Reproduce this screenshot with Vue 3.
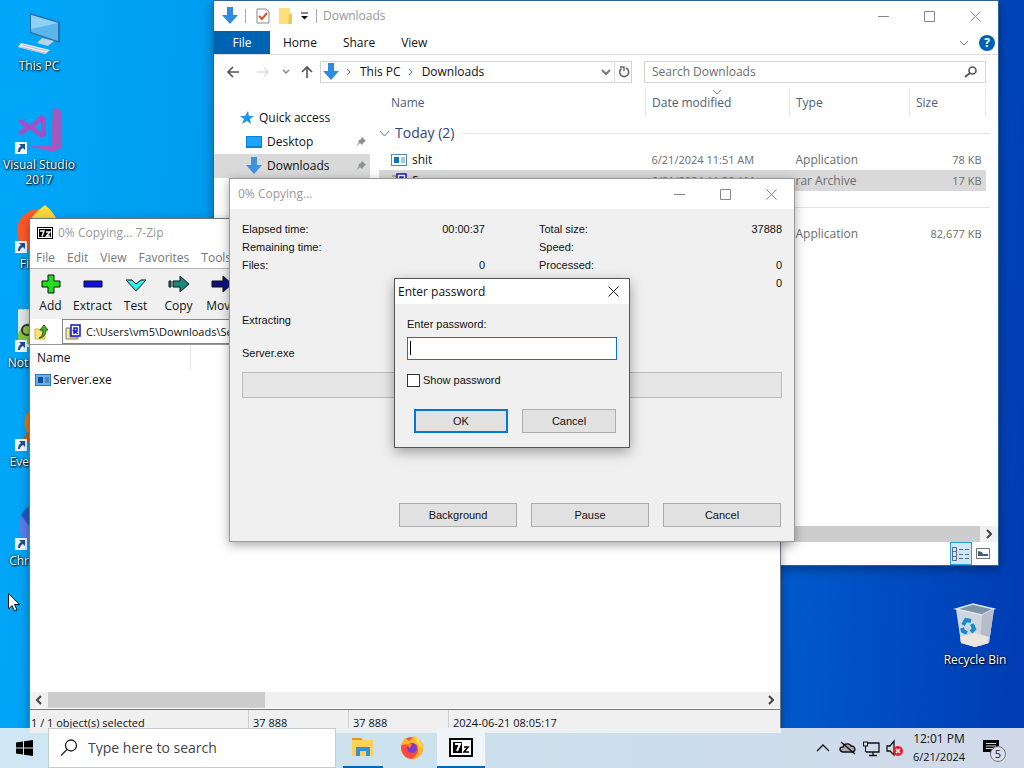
<template>
  <div class="desktop">
    <!-- Desktop icons -->
    <div class="shortcuts">
      <div v-for="item in shortcuts" :key="item.name" class="shortcut">
        <svg class="shortcut-icon" width="48" height="48" viewBox="0 0 48 48">
          <g v-if="item.icon === 'pc'">
            <path d="M15 6 L45 15 V36 L15 26 Z" fill="#2b6f9f" />
            <path d="M16 8 L43 16 V34 L16 25 Z" fill="#5cb6ec" />
            <path d="M16 8 L43 16 L16 22 Z" fill="#8fd0f5" />
            <path d="M27 31 L39 34 L33 39 L22 36 Z" fill="#b9d3e2" />
            <path d="M6 36 L35 43 L30 47 L3 40 Z" fill="#f1eef0" />
            <path d="M7 38 L32 44 M6 40 L30 46" stroke="#b9bcc4" stroke-width="1" />
          </g>
          <g v-else-if="item.icon === 'vs'">
            <path d="M38 1 L47 5 V42 L38 46 L14 40 L36 40 Z" fill="#a05ac0" />
            <path
              d="M3 15 L7 13 L15 19 L26 9 L31 11 V30 L26 32 L15 23 L7 29 L3 27 L9 21 Z M26 16 L20 21 L26 26 Z"
              fill="#a54fc6"
              fill-rule="evenodd"
            />
          </g>
          <g v-else-if="item.icon === 'firefox'">
            <circle cx="24" cy="26" r="22" fill="#ff5a28" />
            <path d="M17 12 C21 7 26 3 30 0 C35 4 42 11 44 22 L24 24 Z" fill="#ffd83a" />
            <circle cx="24" cy="27" r="10" fill="#7a3bd6" />
          </g>
          <g v-else-if="item.icon === 'notepad'">
            <rect x="3" y="5" width="38" height="38" fill="#dfe9e8" />
            <path d="M3 4 H42" stroke="#4d8fbc" stroke-width="3" stroke-dasharray="2 2" />
            <path d="M3 30 C8 18 20 14 30 20 L28 40 H3 Z" fill="#8cc63f" />
            <circle cx="12" cy="26" r="5" fill="none" stroke="#334" stroke-width="2" />
          </g>
          <g v-else-if="item.icon === 'everything'">
            <circle cx="28" cy="20" r="15" fill="none" stroke="#e07a18" stroke-width="7" />
            <path d="M16 31 L5 44" stroke="#c56410" stroke-width="7" />
          </g>
          <g v-else>
            <circle cx="26" cy="24" r="22" fill="#5b7fe8" />
            <path d="M6 13 A22 22 0 0 1 46 15 H26 L17 28 Z" fill="#1f5cc4" />
            <circle cx="26" cy="24" r="9" fill="#fff" />
          </g>
          <g v-if="item.link">
            <rect x="0" y="36" width="12" height="12" fill="#f4f7fb" />
            <path d="M4 38 H10 V44 L8 42 C6 43 5 44 5 46 H3 C3 43 4 41 6 40 Z" fill="#1d4f96" />
          </g>
        </svg>
        <span class="shortcut-label">{{ item.name }}</span>
      </div>
    </div>

    <div class="shortcut recycle">
      <svg class="shortcut-icon" width="48" height="48" viewBox="0 0 48 48">
        <path d="M5 8 L22 3 L43 8 L38 42 L24 46 L10 42 Z" fill="#cfd6de" />
        <path d="M5 8 L22 3 L43 8 L31 14 Z" fill="#7f93a8" stroke="#dfe5ea" stroke-width="1.500" />
        <path d="M31 14 L43 8 L38 42 L29 45 Z" fill="#b7bdc8" />
        <path d="M9 36 L24 32 L38 36 L37 42 L24 46 L10 42 Z" fill="#ebe5df" />
        <g fill="none" stroke="#1789cf" stroke-width="4">
          <path d="M12 24 L15 19 L20 20" />
          <path d="M21 23 L23 28 L20 31" />
          <path d="M16 32 L12 30 L11 27" />
        </g>
      </svg>
      <span class="shortcut-label">Recycle Bin</span>
    </div>

    <!-- File Explorer -->
    <section class="window explorer">
      <header class="titlebar">
        <svg width="16" height="18" viewBox="0 0 16 18"><path :d="arrowDown" fill="#2f8ae0" /></svg>
        <i class="divider"></i>
        <svg class="gap-left" width="14" height="16" viewBox="0 0 14 16">
          <path d="M1 1 H10 L13 4 V15 H1 Z" fill="#fff" stroke="#888" />
          <path d="M3 8 L6 11 L11 5" fill="none" stroke="#d2552e" stroke-width="2" />
        </svg>
        <svg class="gap-left" width="14" height="16" viewBox="0 0 14 16">
          <path d="M1 0 H12 V5 H14 V16 H1 Z" fill="#ffdf7c" />
          <path d="M11 6 H14 V16 H10 Z" fill="#f2c94f" />
        </svg>
        <svg class="gap-left" width="9" height="8" viewBox="0 0 9 8">
          <path d="M1 1 H8" stroke="#111" />
          <path d="M1 4 H8 L4.500 7.500 Z" fill="#111" />
        </svg>
        <i class="divider"></i>
        <span class="title">Downloads</span>
        <WindowButtons />
      </header>

      <nav class="ribbon">
        <button class="tab file">File</button>
        <button class="tab">Home</button>
        <button class="tab">Share</button>
        <button class="tab">View</button>
        <span class="ribbon-end">
          <svg width="8" height="6" viewBox="0 0 8 6"><path d="M0 1 L4 5 L8 1" fill="none" stroke="#777" /></svg>
          <button class="help">?</button>
        </span>
      </nav>

      <div class="address-row">
        <svg class="nav-arrows" width="88" height="16" viewBox="0 0 88 16" fill="none">
          <path d="M12 8 H1 M6 3 L1 8 L6 13" stroke="#555" stroke-width="1.600" />
          <path d="M30 8 H41 M37 4 L41 8 L37 12" stroke="#ddd" stroke-width="1.400" />
          <path d="M56 6 L59 9 L62 6" stroke="#888" stroke-width="1.500" />
          <path d="M80 14 V3 M75 8 L80 3 L85 8" stroke="#555" stroke-width="1.600" />
        </svg>
        <div class="address">
          <svg width="16" height="18" viewBox="0 0 16 18"><path :d="arrowDown" fill="#2f8ae0" /></svg>
          <svg class="crumb-sep" width="5" height="8" viewBox="0 0 5 8"><path d="M1 1 L4 4 L1 7" /></svg>
          <span>This PC</span>
          <svg class="crumb-sep" width="5" height="8" viewBox="0 0 5 8"><path d="M1 1 L4 4 L1 7" /></svg>
          <span>Downloads</span>
          <span class="address-tools">
            <svg width="10" height="8" viewBox="0 0 10 8">
              <path d="M1 2 L5 6 L9 2" fill="none" stroke="#777" stroke-width="2" />
            </svg>
            <i class="tool-line"></i>
            <svg width="12" height="12" viewBox="0 0 12 12">
              <path d="M8 2 A4.500 4.500 0 1 1 3.500 2.500" fill="none" stroke="#666" stroke-width="1.600" />
              <path d="M2 1 H6 V5" fill="none" stroke="#666" stroke-width="1.400" />
            </svg>
          </span>
        </div>
        <label class="search">
          <input type="text" placeholder="Search Downloads" aria-label="Search Downloads" />
          <svg width="14" height="12" viewBox="0 0 14 12" fill="none" stroke="#555">
            <circle cx="8.500" cy="4.500" r="3.500" stroke-width="1.600" />
            <path d="M6 7 L1 11" stroke-width="2" />
          </svg>
        </label>
      </div>

      <div class="explorer-body">
        <aside class="sidebar">
          <a class="side-item top" href="#">
            <svg width="14" height="14" viewBox="0 0 14 14">
              <path d="M8 0 L9 5 L14 5 L10 8 L11 13 L7 10 L2 13 L4 8 L0 5 L5 5 Z" fill="#2196e8" />
            </svg>
            Quick access
          </a>
          <a v-for="place in places" :key="place" class="side-item" :class="{ selected: place === 'Downloads' }" href="#">
            <svg v-if="place === 'Desktop'" width="16" height="16" viewBox="0 0 16 16">
              <rect y="2" width="16" height="12" fill="#0a7fd6" />
              <rect x="1" y="3" width="14" height="9" fill="#1ba5ff" />
            </svg>
            <svg v-else width="16" height="18" viewBox="0 0 16 18"><path :d="arrowDown" fill="#3f93de" /></svg>
            {{ place }}
            <svg class="pin" width="10" height="10" viewBox="0 0 10 10">
              <path d="M6 0 L10 4 L8 5 L6 8 L4 6 L0 10 L3 5 L2 4 L5 2 Z" fill="#8a8f94" />
            </svg>
          </a>
        </aside>

        <main class="files">
          <table>
            <colgroup>
              <col />
              <col class="col-date" />
              <col class="col-type" />
              <col class="col-size" />
            </colgroup>
            <thead>
              <tr>
                <th class="name">Name</th>
                <th>
                  Date modified
                  <svg class="sort" width="8" height="5" viewBox="0 0 8 5"><path d="M0 0 L4 4 L8 0" fill="none" stroke="#888" /></svg>
                </th>
                <th>Type</th>
                <th>Size</th>
              </tr>
            </thead>
            <tbody v-for="group in groups" :key="group.label">
              <tr class="group">
                <td colspan="4">
                  <div class="group-line">
                    <svg width="11" height="7" viewBox="0 0 11 7"><path d="M1 1 L5.500 6 L10 1" fill="none" stroke="#777" /></svg>
                    {{ group.label }}
                  </div>
                </td>
              </tr>
              <tr v-for="file in group.files" :key="file.name" :class="{ picked: file.picked }">
                <td class="file-name">
                  <div class="file-cell">
                    <svg v-if="file.picked" width="16" height="16" viewBox="0 0 16 16">
                      <path d="M1 3 H5 V15 H14" fill="#ffe98a" stroke="#777" />
                      <rect x="6" y="1" width="9" height="11" fill="#fff" stroke="#1515c5" stroke-width="1.500" />
                      <path d="M9 10 V4 H12 V7 H9 L13 10" fill="none" stroke="#1515c5" stroke-width="1.500" />
                    </svg>
                    <svg v-else width="16" height="12" viewBox="0 0 16 12">
                      <rect x="0.500" y="0.500" width="15" height="11" fill="#f4fbff" stroke="#5a8aa8" />
                      <rect x="3" y="3" width="5" height="6" fill="#1671b8" />
                      <path d="M10 4 H14 M10 6 H14 M10 8 H14" stroke="#4b9bc8" />
                    </svg>
                    {{ file.name }}
                  </div>
                </td>
                <td class="digits">{{ file.date }}</td>
                <td>{{ file.type }}</td>
                <td class="digits num">{{ file.size }}</td>
              </tr>
            </tbody>
          </table>
          <div class="scrollbar">
            <i class="thumb wide"></i>
            <svg class="scroll-arrow" width="6" height="10" viewBox="0 0 6 10"><path d="M1 1 L5 5 L1 9" /></svg>
          </div>
        </main>
      </div>
      <footer class="explorer-status">
        <button class="view active" aria-label="Details">
          <svg width="18" height="14" viewBox="0 0 18 14" fill="none" stroke="#668">
            <path d="M0.500 0.500 H4.500 V13.500 H0.500 Z M0 4.500 H5 M0 9.500 H5 M7 2.500 H11 M13 2.500 H17 M7 7.500 H11 M13 7.500 H17 M7 11.500 H11 M13 11.500 H17" />
          </svg>
        </button>
        <button class="view" aria-label="Large icons">
          <svg width="14" height="11" viewBox="0 0 14 11">
            <rect x="0.500" y="0.500" width="13" height="10" fill="#fff" stroke="#777" />
            <path d="M2 3 L6 4 L7 6 H12 V8 H2 Z" fill="#3d5f7c" />
          </svg>
        </button>
      </footer>
    </section>

    <!-- 7-Zip file manager -->
    <section class="window sevenzip">
      <header class="titlebar">
        <svg width="16" height="12" viewBox="0 0 16 12">
          <rect width="16" height="12" fill="#000" />
          <rect x="1.500" y="1.500" width="13" height="9" fill="none" stroke="#fff" />
          <path d="M3 4 H7 L5 9.500 M9 5 H13 L9.500 9 H13" fill="none" stroke="#fff" stroke-width="1.400" />
        </svg>
        <span class="title">0% Copying... 7-Zip</span>
      </header>
      <nav class="menu">
        <button v-for="m in menu" :key="m">{{ m }}</button>
      </nav>
      <div class="toolbar">
        <button v-for="tool in tools" :key="tool.name">
          <svg width="22" height="20" viewBox="0 0 22 20">
            <path :d="tool.path" :fill="tool.color" stroke="#111" />
          </svg>
          {{ tool.name }}
        </button>
      </div>
      <div class="path-row">
        <button class="up" aria-label="Up one level">
          <svg width="16" height="16" viewBox="0 0 16 16">
            <path d="M1 5 H5 L6 7 H11 V15 H1 Z" fill="#ffe26a" stroke="#c9b34a" />
            <path d="M5 14 C8 13 9 10 9 6 H6 L10 1 L14 6 H12 C12 11 9 14 5 14 Z" fill="#4fae2a" stroke="#245d17" />
          </svg>
        </button>
        <div class="path">
          <svg width="16" height="16" viewBox="0 0 16 16">
            <path d="M1 4 H5 V13 H13 V15 H1 Z" fill="#ffe98a" stroke="#777" />
            <rect x="6" y="1" width="9" height="11" fill="#fff" stroke="#1515c5" stroke-width="1.500" />
            <path d="M9 10 V4 H12 V7 H9 L13 10" fill="none" stroke="#1515c5" stroke-width="1.500" />
          </svg>
          C:\Users\vm5\Downloads\Server.rar\
        </div>
      </div>
      <div class="archive">
        <div class="archive-head"><span>Name</span></div>
        <div class="archive-row">
          <svg width="16" height="12" viewBox="0 0 16 12">
            <rect x="0.500" y="0.500" width="15" height="11" fill="#6fb2ea" stroke="#2d72b0" />
            <rect x="3" y="3" width="5" height="6" fill="#0d4f9c" />
            <path d="M10 4 H14 M10 6 H14 M10 8 H14" stroke="#1b5fa5" />
          </svg>
          Server.exe
        </div>
      </div>
      <div class="scrollbar">
        <svg class="scroll-arrow" width="6" height="10" viewBox="0 0 6 10"><path d="M5 1 L1 5 L5 9" /></svg>
        <i class="thumb short"></i>
        <svg class="scroll-arrow end" width="6" height="10" viewBox="0 0 6 10"><path d="M1 1 L5 5 L1 9" /></svg>
      </div>
      <footer class="zip-status">
        <span class="wide">1 / 1 object(s) selected</span>
        <span>37 888</span>
        <span>37 888</span>
        <span>2024-06-21 08:05:17</span>
      </footer>
    </section>

    <!-- Copy progress -->
    <section class="window progress-window">
      <header class="titlebar">
        <span class="title">0% Copying...</span>
        <WindowButtons />
      </header>
      <div class="progress-body">
        <div class="stats">
          <dl v-for="(col, i) in stats" :key="i">
            <div v-for="row in col" :key="row[0]"><dt>{{ row[0] }}</dt><dd>{{ row[1] }}</dd></div>
          </dl>
        </div>
        <p>Extracting</p>
        <p class="current">Server.exe</p>
        <div class="bar" role="progressbar" aria-valuenow="0"></div>
        <div class="actions">
          <button class="btn">Background</button>
          <button class="btn">Pause</button>
          <button class="btn">Cancel</button>
        </div>
      </div>
    </section>

    <!-- Password prompt -->
    <form class="window password" @submit.prevent>
      <header class="titlebar">
        <span class="title">Enter password</span>
        <button class="close" type="button" aria-label="Close">
          <svg width="11" height="11" viewBox="0 0 11 11"><path d="M0.500 0.500 L10.500 10.500 M10.500 0.500 L0.500 10.500" stroke="#222" /></svg>
        </button>
      </header>
      <div class="password-body">
        <label for="pw">Enter password:</label>
        <div class="field"><input id="pw" v-model="password" :type="showPassword ? 'text' : 'password'" /></div>
        <label class="check"><input v-model="showPassword" type="checkbox" />Show password</label>
        <div class="actions">
          <button class="btn default" type="submit">OK</button>
          <button class="btn" type="button">Cancel</button>
        </div>
      </div>
    </form>

    <!-- Taskbar -->
    <footer class="taskbar">
      <button class="start" aria-label="Start">
        <svg width="17" height="16" viewBox="0 0 17 16">
          <path d="M0 2.500 L7 1.500 V7.500 H0 Z M8 1.300 L17 0 V7.500 H8 Z M0 8.500 H7 V14.500 L0 13.500 Z M8 8.500 H17 V16 L8 14.700 Z" fill="#000" />
        </svg>
      </button>
      <label class="task-search">
        <svg width="18" height="18" viewBox="0 0 18 18" fill="none" stroke="#222">
          <circle cx="11" cy="6.500" r="5.500" stroke-width="1.300" />
          <path d="M7 10.500 L1 16.500" stroke-width="1.300" />
        </svg>
        <input type="text" placeholder="Type here to search" aria-label="Type here to search" />
      </label>
      <div class="tasks">
        <button class="task open" aria-label="File Explorer">
          <svg width="22" height="20" viewBox="0 0 22 20">
            <path d="M0 1 H9 L11 3 H21 V19 H0 Z" fill="#ffd257" />
            <path d="M0 1 H9 L11 3 H0 Z" fill="#d99b16" />
            <path d="M4 19 V10 H18 V19 H14 V14 H8 V19 Z" fill="#3a8fd0" />
          </svg>
        </button>
        <button class="task" aria-label="Firefox">
          <svg width="24" height="24" viewBox="0 0 24 24">
            <circle cx="12" cy="13" r="11" fill="#ff4a3d" />
            <path d="M1 10 L5 3 L9 6 L14 1 C20 4 24 9 23 15 C21 21 17 24 12 24 C18 20 20 14 16 9 L8 9 Z" fill="#ffb52b" />
            <path d="M14 1 C20 4 23 9 22 14 L17 8 Z" fill="#ffdf3f" />
            <circle cx="12" cy="13" r="5" fill="#7d3bd2" />
            <path d="M5 9 L12 9 L10 13 Z" fill="#ff7a2a" />
          </svg>
        </button>
        <button class="task open active" aria-label="7-Zip">
          <svg width="24" height="19" viewBox="0 0 24 19">
            <rect x="1" y="1" width="22" height="17" fill="#fff" stroke="#000" stroke-width="2" />
            <rect x="4" y="4" width="9" height="11" fill="#000" />
            <path d="M6 6 H11 L8 13" fill="none" stroke="#fff" stroke-width="2" />
            <path d="M15 9 H19 L15 14 H20" fill="none" stroke="#000" stroke-width="1.600" />
          </svg>
        </button>
      </div>
      <div class="tray">
        <svg width="88" height="20" viewBox="0 0 88 20" fill="none" stroke="#111">
          <path d="M2 13 L8 7 L14 13" stroke-width="1.400" />
          <path d="M28 14 C24 13 24 9 28 9 C29 5 35 5 36 8 C41 8 41 14 37 14 Z" fill="#aaa" stroke-width="1.400" />
          <path d="M26 4 L40 16" stroke-width="1.500" />
          <path d="M53 5 H64 V14 H51 M58 14 V17 M54 17.500 H62" stroke-width="1.300" />
          <rect x="48.500" y="4" width="4" height="4" />
          <path d="M50.500 8 V14" />
          <path d="M72 8 H75 L79 3 V17 L75 13 H72 Z" stroke-width="1.300" />
          <circle cx="83" cy="13" r="5" fill="#e0202c" stroke="none" />
          <path d="M81 11 L85 15 M85 11 L81 15" stroke="#fff" stroke-width="1.500" />
        </svg>
        <div class="clock"><span>12:01 PM</span><span class="digits">6/21/2024</span></div>
        <button class="notify" aria-label="Notifications">
          <svg width="16" height="16" viewBox="0 0 16 16">
            <path d="M0 0 H16 V12 H10 L7 16 V12 H0 Z" fill="#000" />
            <path d="M3 3.500 H13 M3 6 H13 M3 8.500 H10" stroke="#cdd" />
          </svg>
          <span class="badge">5</span>
        </button>
      </div>
    </footer>

    <svg class="cursor" width="12" height="19" viewBox="0 0 12 19">
      <path d="M0.500 0.500 V16 L4 12.500 L6.500 18 L9 17 L6.500 11.500 H11.500 Z" fill="#fff" stroke="#111" />
    </svg>
  </div>
</template>

<script setup>
import { h, ref } from 'vue'

const password = ref('')
const showPassword = ref(false)

const arrowDown = 'M5 0 H11 V8 H16 L8 17 L0 8 H5 Z'

// minimize / maximize / close
const controls = [
  ['Minimize', 'M0 5.5 H11'],
  ['Maximize', 'M0.5 0.5 H10.5 V10.5 H0.5 Z'],
  ['Close', 'M0.5 0.5 L10.5 10.5 M10.5 0.5 L0.5 10.5']
]
const WindowButtons = () =>
  h('span', { class: 'window-buttons' }, controls.map(([label, d]) =>
    h('button', { 'aria-label': label }, [
      h('svg', { width: 11, height: 11, viewBox: '0 0 11 11' }, [h('path', { d, fill: 'none', stroke: '#888' })])
    ])
  ))

const shortcuts = [
  { name: 'This PC', icon: 'pc' },
  { name: 'Visual Studio 2017', icon: 'vs', link: true },
  { name: 'Firefox', icon: 'firefox', link: true },
  { name: 'Notepad++', icon: 'notepad', link: true },
  { name: 'Everything', icon: 'everything', link: true },
  { name: 'Chromium', icon: 'chromium', link: true }
]

const places = ['Desktop', 'Downloads']

const groups = [
  {
    label: 'Today (2)',
    files: [
      { name: 'shit', date: '6/21/2024 11:51 AM', type: 'Application', size: '78 KB' },
      { name: 'Server', date: '6/21/2024 11:30 AM', type: 'rar Archive', size: '17 KB', picked: true }
    ]
  },
  {
    label: 'Earlier this year (1)',
    files: [{ name: '', date: '', type: 'Application', size: '82,677 KB' }]
  }
]

const menu = ['File', 'Edit', 'View', 'Favorites', 'Tools']

const tools = [
  { name: 'Add', color: '#1fe01f', path: 'M8 1 H14 V7 H20 V13 H14 V19 H8 V13 H2 V7 H8 Z' },
  { name: 'Extract', color: '#1010e8', path: 'M2 7 H20 V13 H2 Z' },
  { name: 'Test', color: '#30f0f0', path: 'M1 6 H7 L11 10 L16 6 H21 L11 17 Z' },
  { name: 'Copy', color: '#1b8a7c', path: 'M1 7 H3 V13 H1 Z M5 7 H12 V2 L21 10 L12 18 V13 H5 Z' },
  { name: 'Move', color: '#101080', path: 'M1 7 H12 V2 L21 10 L12 18 V13 H1 Z' }
]

const stats = [
  [['Elapsed time:', '00:00:37'], ['Remaining time:', ''], ['Files:', '0']],
  [['Total size:', '37888'], ['Speed:', ''], ['Processed:', '0'], ['Packed size:', '0']]
]
</script>

<style>
body {
  margin: 0;
}

.window-buttons {
  display: flex;
  margin-left: auto;
}

.window-buttons button {
  width: 46px;
  height: 28px;
  padding: 0;
  border: 0;
  background: none;
}

.window-buttons svg {
  display: block;
  margin: 0 auto;
}
</style>

<style scoped>
.desktop {
  position: relative;
  height: 100vh;
  overflow: hidden;
  font-family: "Open Sans", "Noto Sans", sans-serif;
  font-size: 12px;
  line-height: 16px;
  color: #111;
  background: linear-gradient(94deg, #00a8fa 0%, #009cf0 20%, #0058cb 78%, #003bb2 100%);
}

.desktop * {
  box-sizing: border-box;
}

button,
input {
  font: inherit;
  color: inherit;
}

button {
  padding: 0;
  border: 0;
  background: none;
}

svg {
  flex: none;
}

p,
dl,
dd {
  margin: 0;
}

.digits {
  font-size: 11px;
}

/* Desktop */
.shortcuts {
  width: 78px;
}

.shortcut {
  display: flex;
  flex-direction: column;
  align-items: center;
  width: 78px;
  height: 99px;
  padding-top: 7px;
}

.shortcut-icon {
  height: 48px;
}

.shortcut-label {
  margin-top: 3px;
  line-height: 15px;
  text-align: center;
  color: #fff;
  text-shadow: 1px 1px 2px #000, 0 0 2px #000;
}

.recycle {
  position: absolute;
  top: 594px;
  right: 10px;
}

.cursor {
  position: absolute;
  left: 8px;
  top: 593px;
}

/* Windows */
.window {
  position: absolute;
  display: flex;
  flex-direction: column;
  background: #fff;
  border: 1px solid #6d7680;
  box-shadow: 0 3px 10px rgba(0, 0, 0, 0.35);
}

.titlebar {
  display: flex;
  align-items: center;
  height: 30px;
}

.title {
  color: #999;
}

.explorer {
  left: 213px;
  top: 0;
  width: 786px;
  height: 566px;
  border-color: #2e6396;
}

.explorer .titlebar {
  padding-left: 8px;
}

.divider {
  width: 1px;
  height: 14px;
  margin: 0 2px 0 7px;
  background: #aaa;
}

.gap-left {
  margin-left: 8px;
}

.explorer .title {
  margin-left: 4px;
}

.ribbon {
  display: flex;
  height: 24px;
  border-bottom: 1px solid #dcdcdc;
}

.tab {
  padding: 0 13px;
}

.tab.file {
  width: 56px;
  color: #fff;
  background: #0063b1;
}

.ribbon-end {
  display: flex;
  align-items: center;
  gap: 11px;
  margin-left: auto;
  padding-right: 3px;
}

.help {
  width: 16px;
  height: 16px;
  border-radius: 50%;
  font-weight: 700;
  color: #fff;
  background: #0063b1;
}

.address-row {
  display: flex;
  align-items: center;
  height: 34px;
  padding-right: 12px;
}

.nav-arrows {
  margin: 0 5px 0 13px;
}

.address,
.search {
  display: flex;
  align-items: center;
  height: 22px;
  border: 1px solid #d4d4d4;
}

.address {
  flex: 1;
  padding-left: 2px;
}

.crumb-sep {
  margin: 0 9px 0 7px;
  fill: none;
  stroke: #666;
}

.address-tools {
  display: flex;
  align-items: center;
  gap: 3px;
  margin-left: auto;
  padding-right: 1px;
}

.tool-line {
  width: 1px;
  height: 20px;
  background: #ddd;
}

.search {
  width: 342px;
  margin-left: 12px;
  padding: 0 7px;
}

.search input {
  flex: 1;
  min-width: 0;
  padding: 0;
  border: 0;
  outline: 0;
}

.search input::placeholder {
  color: #6d6d6d;
}

.explorer-body {
  display: flex;
  flex: 1;
  min-height: 0;
}

.sidebar {
  width: 156px;
  padding-top: 17px;
}

.side-item {
  display: flex;
  align-items: center;
  gap: 5px;
  height: 24px;
  padding: 0 4px 0 32px;
  color: #111;
  text-decoration: none;
}

.side-item.top {
  padding-left: 26px;
}

.side-item.selected {
  background: #d9d9d9;
}

.pin {
  margin-left: auto;
}

.files {
  display: flex;
  flex: 1;
  flex-direction: column;
  padding-left: 9px;
}

table {
  width: calc(100% - 12px);
  border-collapse: collapse;
  table-layout: fixed;
  color: #6d6d6d;
}

.col-date {
  width: 144px;
}

.col-type {
  width: 120px;
}

.col-size {
  width: 76px;
}

th {
  position: relative;
  height: 28px;
  padding: 0 6px;
  font-weight: 400;
  text-align: left;
  color: #4c607a;
  border-right: 1px solid #e8e8e8;
}

th.name {
  padding-left: 12px;
}

.sort {
  position: absolute;
  left: 67px;
  top: 1px;
}

td {
  height: 21px;
  padding: 0 4px 0 6px;
  white-space: nowrap;
}

td.num {
  text-align: right;
}

.group td {
  height: 32px;
  padding: 0;
}

.group-line {
  display: flex;
  align-items: center;
  gap: 5px;
  margin-right: -4px;
  font-size: 14px;
  color: #33437b;
}

.group-line::after {
  content: "";
  flex: 1;
  height: 1px;
  margin-left: 4px;
  background: #e3e3e3;
}

td.file-name {
  padding-left: 12px;
  color: #111;
}

.file-cell {
  display: flex;
  align-items: center;
  gap: 5px;
}

.picked {
  background: #d9d9d9;
}

.scrollbar {
  display: flex;
  align-items: center;
  height: 16px;
  margin-top: auto;
  background: #f0f0f0;
}

.scroll-arrow {
  margin: 0 6px;
  fill: none;
  stroke: #444;
  stroke-width: 2;
}

.scroll-arrow.end {
  margin-left: auto;
}

.thumb {
  height: 16px;
  background: #cdcdcd;
}

.thumb.wide {
  flex: 1;
}

.thumb.short {
  width: 217px;
}

.explorer-status {
  display: flex;
  justify-content: flex-end;
  height: 23px;
  padding-right: 4px;
}

.view {
  display: flex;
  align-items: center;
  justify-content: center;
  width: 22px;
}

.view.active {
  border: 1px solid #26a0da;
  background: #cce8f5;
}

/* 7-Zip */
.sevenzip {
  left: 29px;
  top: 218px;
  width: 752px;
  height: 515px;
}

.sevenzip .titlebar {
  flex: none;
  height: 28px;
  padding-left: 7px;
}

.sevenzip .title {
  margin-left: 5px;
}

.menu {
  display: flex;
  gap: 12px;
  height: 22px;
  padding: 0 6px;
  color: #777;
  border-bottom: 1px solid #b5b5b5;
}

.toolbar {
  display: flex;
  height: 50px;
  padding-top: 5px;
  background: #f0f0f0;
}

.toolbar button {
  display: flex;
  flex-direction: column;
  align-items: center;
  gap: 4px;
  width: 43px;
}

.toolbar button:first-child {
  width: 41px;
}

.path-row {
  display: flex;
  height: 26px;
  border-bottom: 1px solid #999;
}

.up {
  display: flex;
  align-items: center;
  width: 32px;
  padding-left: 4px;
}

.path {
  display: flex;
  flex: 1;
  align-items: center;
  gap: 5px;
  padding-left: 2px;
  border: 1px solid #888;
  font-size: 11px;
}

.archive {
  flex: 1;
}

.archive-head {
  display: flex;
  height: 24px;
}

.archive-head span {
  width: 161px;
  padding: 5px 7px;
  border-right: 1px solid #e5e5e5;
}

.archive-row {
  display: flex;
  align-items: center;
  gap: 2px;
  height: 21px;
  padding-left: 5px;
}

.zip-status {
  display: flex;
  height: 23px;
  margin-top: 1px;
  font-size: 11px;
  background: #f0f0f0;
  border-top: 1px solid #777;
}

.zip-status span {
  width: 100px;
  padding: 5px 4px 0;
  border-left: 1px solid #d0d0d0;
  white-space: nowrap;
}

.zip-status .wide {
  width: 218px;
  padding-left: 1px;
  border: 0;
}

.zip-status span:last-child {
  flex: 1;
}

/* Copy progress */
.progress-window {
  left: 229px;
  top: 178px;
  width: 566px;
  height: 364px;
  border-color: #999;
  background: #f0f0f0;
}

.progress-window .titlebar,
.password .titlebar {
  background: #fff;
}

.progress-window .titlebar {
  padding-left: 8px;
}

.progress-body,
.password-body {
  display: flex;
  flex: 1;
  flex-direction: column;
  font-family: "Liberation Sans", Arial, sans-serif;
  font-size: 11px;
}

.progress-body {
  padding: 11px 12px 14px;
}

.stats {
  display: flex;
  gap: 54px;
  height: 92px;
}

.stats dl {
  flex: 1;
}

.stats dl > div {
  display: flex;
  justify-content: space-between;
  height: 18px;
  line-height: 18px;
}

.current {
  margin-top: 17px;
}

.bar {
  height: 26px;
  margin-top: 11px;
  border: 1px solid #bcbcbc;
  background: #e6e6e6;
}

.actions {
  display: flex;
  justify-content: flex-end;
  gap: 14px;
  margin-top: auto;
  padding-right: 1px;
}

.btn {
  width: 118px;
  height: 24px;
  border: 1px solid #adadad;
  background: #e1e1e1;
}

/* Password prompt */
.password {
  left: 394px;
  top: 278px;
  width: 236px;
  height: 170px;
  border-color: #555;
  background: #f0f0f0;
  box-shadow: 0 4px 12px rgba(0, 0, 0, 0.35);
}

.password .titlebar {
  height: 25px;
  padding-left: 3px;
}

.password .title {
  color: #111;
}

.close {
  display: flex;
  margin-left: auto;
  padding-right: 10px;
}

.password-body {
  padding: 12px 12px 14px;
}

.field {
  position: relative;
  margin-top: 5px;
}

.field input {
  display: block;
  width: 100%;
  height: 23px;
  padding: 0 4px;
  border: 1px solid #0078d7;
  outline: 0;
  background: #fff;
}

/* text caret */
.field::before {
  content: "";
  position: absolute;
  left: 3px;
  top: 4px;
  width: 1px;
  height: 14px;
  background: #000;
}

.check {
  display: flex;
  align-items: center;
  gap: 3px;
  margin-top: 12px;
}

.check input {
  appearance: none;
  width: 13px;
  height: 13px;
  margin: 0;
  border: 1px solid #333;
  background: #fff;
}

.password .btn {
  width: 94px;
}

.password .btn.default {
  border: 2px solid #0078d7;
}

/* Taskbar */
.taskbar {
  position: absolute;
  left: 0;
  right: 0;
  bottom: 0;
  display: flex;
  height: 40px;
  background:
    linear-gradient(#f0f0f0, #eaf0f3) 30px 0 / 751px 5px no-repeat,
    linear-gradient(90deg, #cfe7f4, #cbe0ec 50%, #d1d9e9);
}

.start {
  display: flex;
  align-items: center;
  justify-content: center;
  width: 48px;
}

.task-search {
  display: flex;
  align-items: center;
  gap: 10px;
  width: 288px;
  padding-left: 11px;
  border: 1px solid #c5cdd2;
  background: #fff;
}

.task-search input {
  flex: 1;
  min-width: 0;
  padding: 0;
  border: 0;
  outline: 0;
  font-size: 14px;
}

.task-search input::placeholder {
  color: #444;
}

.tasks {
  display: flex;
  gap: 9px;
  margin-left: 7px;
}

.task {
  display: flex;
  align-items: center;
  justify-content: center;
  width: 40px;
  border-bottom: 2px solid transparent;
}

.task.open {
  border-color: #0067b8;
}

.task.active {
  width: 48px;
  margin-left: -4px;
  background: #eff5f8;
}

.tray {
  display: flex;
  align-items: center;
  margin-left: auto;
  padding-right: 25px;
}

.clock {
  display: flex;
  flex-direction: column;
  align-items: center;
  width: 72px;
  line-height: 18px;
}

.notify {
  position: relative;
  display: flex;
  margin-left: 8px;
}

.badge {
  position: absolute;
  left: 7px;
  top: 6px;
  width: 16px;
  height: 16px;
  font-size: 11px;
  line-height: 14px;
  text-align: center;
  border: 1px solid #777;
  border-radius: 50%;
  background: #dde;
}
</style>
